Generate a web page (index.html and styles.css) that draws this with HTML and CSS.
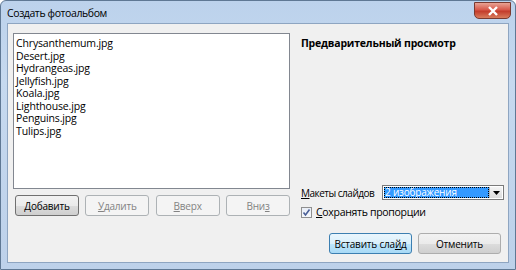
FILE: index.html
```html
<!DOCTYPE html>
<html lang="ru">
  <head>
    <meta charset="UTF-8" />
    <title>Создать фотоальбом</title>
    <link rel="stylesheet" href="styles.css">
  </head>
  <body>
    <div class="window">
      <div class="titlebar">
        <span class="title">Создать фотоальбом</span>
        <button class="close-btn">
          <svg width="12" height="10" viewBox="0 0 12 10">
            <path d="M2 1 L10 9 M10 1 L2 9" stroke="#fff" stroke-width="2.4" fill="none" />
          </svg>
        </button>
      </div>

      <div class="client">
        <div class="left-col">
          <div class="listbox">
            <div class="list-item">Chrysanthemum.jpg</div>
            <div class="list-item">Desert.jpg</div>
            <div class="list-item">Hydrangeas.jpg</div>
            <div class="list-item">Jellyfish.jpg</div>
            <div class="list-item">Koala.jpg</div>
            <div class="list-item">Lighthouse.jpg</div>
            <div class="list-item">Penguins.jpg</div>
            <div class="list-item">Tulips.jpg</div>
          </div>
          <div class="list-buttons">
            <button class="btn btn-default"><u>Д</u>обавить</button>
            <button class="btn" disabled><u>У</u>далить</button>
            <button class="btn" disabled><u>В</u>верх</button>
            <button class="btn" disabled>Вни<u>з</u></button>
          </div>
        </div>

        <div class="right-col">
          <div class="preview-title">Предварительный просмотр</div>
          <div class="spacer"></div>
          <div class="layout-row">
            <label class="layout-label"><u>М</u>акеты слайдов</label>
            <div class="select">
              <span class="select-value">2 изображения</span>
              <span class="select-arrow">
                <svg width="7" height="4" viewBox="0 0 7 4"><path d="M0 0 H7 L3.5 4 Z" fill="#000" /></svg>
              </span>
            </div>
          </div>
          <div class="check-row">
            <span class="checkbox">
              <svg width="9" height="9" viewBox="0 0 9 9"><path d="M1.5 4.5 L3.5 7 L7.5 1.5" stroke="#4a5f97" stroke-width="1.6" fill="none" /></svg>
            </span>
            <label><u>С</u>охранять пропорции</label>
          </div>
          <div class="dialog-buttons">
            <button class="btn btn-primary">Вставить сла<u>й</u>д</button>
            <button class="btn btn-cancel">Отменить</button>
          </div>
        </div>
      </div>
    </div>
  </body>
</html>
```

FILE: styles.css
```css
body {
  margin: 0;
  font-family: "Open Sans", "Noto Sans", sans-serif;
  font-size: 10.5px;
  color: #000;
  background: #fff;
}

.window {
  width: 516px;
  height: 270px;
  box-sizing: border-box;
  background: linear-gradient(180deg, #bcd2ec 0%, #c6d9ef 30%, #bdd1ea 100%);
  border: 1px solid #5f7894;
  border-radius: 6px 6px 0 0;
  padding: 0 6px 6px 6px;
  display: flex;
  flex-direction: column;
}

.titlebar {
  height: 22px;
  display: flex;
  align-items: flex-start;
  justify-content: space-between;
}

.title {
  margin-top: 5px;
  font-size: 10.5px;
  letter-spacing: -0.4px;
  color: #000;
}

.close-btn {
  width: 37px;
  height: 17px;
  margin-top: 1px;
  margin-right: -2px;
  border: 1px solid #7a3a30;
  border-radius: 0 0 5px 5px;
  background: linear-gradient(180deg, #e8a394 0%, #d7584a 45%, #c33c2b 55%, #d87c5c 100%);
  display: flex;
  align-items: center;
  justify-content: center;
  padding: 0;
}

.client {
  flex: 1;
  background: #f0f0f0;
  border: 1px solid #8ea5c1;
  display: flex;
  padding: 9px 6px 8px 5px;
  gap: 11px;
}

.left-col {
  width: 277px;
  display: flex;
  flex-direction: column;
}

.listbox {
  height: 156px;
  box-sizing: border-box;
  background: #fff;
  border: 1px solid #828790;
  padding: 3px 2px;
}

.list-item {
  height: 12.5px;
  line-height: 12.5px;
  letter-spacing: -0.15px;
}

.list-buttons {
  display: flex;
  justify-content: space-between;
  margin-top: 6px;
  padding-left: 2px;
}

.btn {
  width: 64px;
  height: 21px;
  font-family: "Open Sans", "Noto Sans", sans-serif;
  font-size: 10px;
  letter-spacing: -0.2px;
  border: 1px solid #adadad;
  border-radius: 3px;
  background: linear-gradient(180deg, #f2f2f2 0%, #ebebeb 50%, #dddddd 51%, #cfcfcf 100%);
  color: #000;
  padding: 0;
}

.btn-default {
  border-color: #707070;
}

.btn:disabled {
  background: #f4f4f4;
  border-color: #adb2b5;
  color: #838383;
}

.right-col {
  flex: 1;
  display: flex;
  flex-direction: column;
}

.preview-title {
  font-weight: bold;
  font-size: 10.5px;
  letter-spacing: -0.2px;
  margin-top: 3px;
}

.spacer {
  flex: 1;
}

.layout-row {
  display: flex;
  align-items: center;
  justify-content: space-between;
  margin-right: -2px;
}

.layout-label {
  white-space: nowrap;
  font-size: 10px;
  letter-spacing: -0.5px;
}

.select {
  width: 122px;
  height: 15px;
  flex-shrink: 0;
  box-sizing: border-box;
  border: 1px solid #7a7a7a;
  background: #fff;
  display: flex;
  padding: 1px;
}

.select-value {
  flex: 1;
  background: #3399ff;
  color: #fff;
  outline: 1px dotted #000;
  outline-offset: -1px;
  line-height: 11px;
  padding-left: 1px;
  font-size: 10px;
  letter-spacing: -0.2px;
  white-space: nowrap;
}

.select-arrow {
  width: 12px;
  display: flex;
  align-items: center;
  justify-content: center;
  background: linear-gradient(180deg, #f4f4f4, #dcdcdc);
  border-left: 1px solid #b5b5b5;
}

.check-row {
  display: flex;
  align-items: center;
  gap: 4px;
  margin-top: 5px;
  letter-spacing: -0.3px;
}

.checkbox {
  width: 11px;
  height: 11px;
  box-sizing: border-box;
  border: 1px solid #8f8f8f;
  background: linear-gradient(180deg, #e9eef7, #f6f8fb);
  display: flex;
  align-items: center;
  justify-content: center;
}

.dialog-buttons {
  display: flex;
  justify-content: flex-end;
  gap: 6px;
  margin-top: 14px;
  padding-right: 1px;
}

.dialog-buttons .btn {
  width: 83px;
}

.btn-primary {
  border-color: #3c7fb1;
  background: linear-gradient(180deg, #eaf6fd 0%, #d9f0fc 50%, #bee6fd 51%, #a7d9f5 100%);
}
```
